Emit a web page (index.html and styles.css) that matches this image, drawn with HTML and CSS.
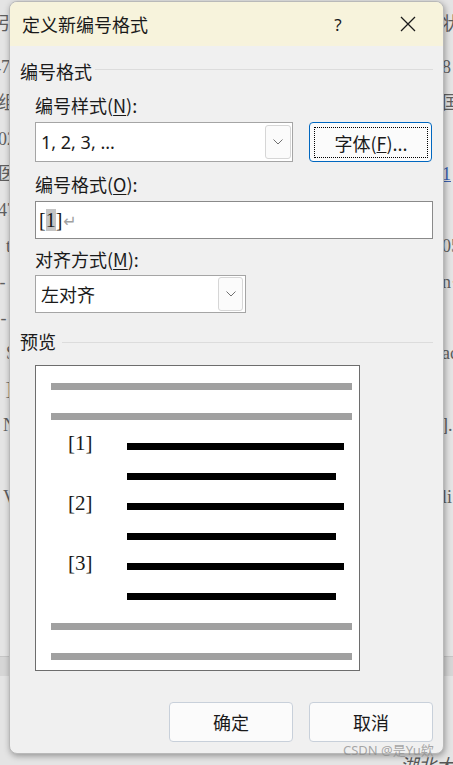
FILE: index.html
```html
<!DOCTYPE html>
<html lang="zh-CN">

<head>
    <meta charset="UTF-8">
    <meta name="viewport" content="width=device-width, initial-scale=1.0">
    <title>定义新编号格式</title>
    <link rel="stylesheet" href="styles.css">
</head>

<body>
    <!-- 背后的文档 -->
    <div class="doc">
        <div class="doc-line first"><span class="l">指引</span><span class="r">状态</span></div>
        <div class="doc-line"><span class="l">47[</span><span class="r">8</span></div>
        <div class="doc-line"><span class="l">会组</span><span class="r">国和</span></div>
        <div class="doc-line"><span class="l">02</span><span class="r"></span></div>
        <div class="doc-line"><span class="l">[医</span><span class="r link">1</span></div>
        <div class="doc-line"><span class="l">47</span><span class="r"></span></div>
        <div class="doc-line"><span class="l">ti</span><span class="r">05</span></div>
        <div class="doc-line"><span class="l">- (</span><span class="r">n·</span></div>
        <div class="doc-line"><span class="l">- :</span><span class="r"></span></div>
        <div class="doc-line"><span class="l">S</span><span class="r">ac</span></div>
        <div class="doc-line"><span class="l">].</span><span class="r"></span></div>
        <div class="doc-line"><span class="l">N</span><span class="r">].</span></div>
        <div class="doc-line"><span class="l"></span><span class="r"></span></div>
        <div class="doc-line"><span class="l">V</span><span class="r">li</span></div>
        <div class="doc-band"></div>
        <div class="doc-foot">湖北大学</div>
    </div>

    <div class="dialog">
        <div class="titlebar">
            <span class="title">定义新编号格式</span>
            <span class="help">?</span>
            <span class="close">
                <svg width="16" height="16" viewBox="0 0 16 16"><path d="M1 1L15 15M15 1L1 15" stroke="#1a1a1a" stroke-width="1.3" fill="none"/></svg>
            </span>
        </div>
        <div class="body">
            <div class="group-head"><span>编号格式</span><i></i></div>
            <div class="field">
                <div class="label">编号样式(<u>N</u>):</div>
                <div class="row">
                    <div class="select style-sel">
                        <span class="val latin">1, 2, 3, ...</span>
                        <b class="drop"><svg width="10" height="6" viewBox="0 0 10 6"><path d="M0.5 0.5L5 5L9.5 0.5" fill="none" stroke="#707070"/></svg></b>
                    </div>
                    <div class="btn font-btn"><span class="focus">字体(<u>F</u>)...</span></div>
                </div>
                <div class="label">编号格式(<u>O</u>):</div>
                <div class="input"><span class="serif">[<em class="sel">1</em>]</span><span class="mark">↵</span></div>
                <div class="label label-m">对齐方式(<u>M</u>):</div>
                <div class="select align-sel">
                    <span class="val">左对齐</span>
                    <b class="drop"><svg width="10" height="6" viewBox="0 0 10 6"><path d="M0.5 0.5L5 5L9.5 0.5" fill="none" stroke="#707070"/></svg></b>
                </div>
            </div>
            <div class="group-head preview-head"><span>预览</span><i></i></div>
            <div class="field">
                <div class="preview">
                    <div class="pv gray"></div>
                    <div class="pv gray"></div>
                    <div class="pv item"><span class="num">[1]</span><b class="bar"></b></div>
                    <div class="pv item"><b class="bar short"></b></div>
                    <div class="pv item"><span class="num">[2]</span><b class="bar"></b></div>
                    <div class="pv item"><b class="bar short"></b></div>
                    <div class="pv item"><span class="num">[3]</span><b class="bar"></b></div>
                    <div class="pv item"><b class="bar short"></b></div>
                    <div class="pv gray"></div>
                    <div class="pv gray last"></div>
                </div>
            </div>
            <div class="actions">
                <div class="btn">确定</div>
                <div class="btn">取消</div>
            </div>
        </div>
    </div>

    <div class="watermark">CSDN @是Yu欸</div>
</body>

</html>
```

FILE: styles.css
```css
* {
    margin: 0;
    padding: 0;
    box-sizing: border-box;
}
body {
    width: 453px;
    height: 765px;
    overflow: hidden;
    position: relative;
    background: #e4e4e4;
    font-family: "Noto Sans CJK SC", sans-serif;
    color: #1a1a1a;
}

/* 背后的文档 */
.doc {
    padding-top: 7px;
    font-family: "Liberation Serif", "Noto Sans CJK SC", serif;
    font-size: 18px;
    color: #5f5f5f;
}
.doc-line {
    display: flex;
    height: 35.8px;
    line-height: 35.8px;
}
.doc-line.first {
    height: 36px;
    margin-bottom: 7px;
}
.doc-line .l {
    display: flex;
    justify-content: flex-end;
    width: 16px;
    white-space: nowrap;
}
.doc-line .r {
    margin-left: auto;
    width: 11px;
    white-space: nowrap;
}
.doc-line .link {
    color: #3a5fb0;
    text-decoration: underline;
}
.doc-band {
    margin-top: 141px;
    height: 20px;
    background: #d6d6d6;
    border-top: 1px solid #c6c6c6;
}
.doc-foot {
    margin-top: 76px;
    padding-left: 400px;
    line-height: 24px;
    font-style: italic;
    font-family: "Noto Sans CJK SC", sans-serif;
    color: #555;
    white-space: nowrap;
}

/* 对话框 */
.dialog {
    position: absolute;
    left: 9px;
    top: 1px;
    width: 435px;
    height: 753px;
    background: #f0f0f0;
    border: 1px solid #b9b9b9;
    border-radius: 8px;
    box-shadow: 1px 2px 6px rgba(0, 0, 0, .35);
    overflow: hidden;
}
.titlebar {
    display: flex;
    align-items: center;
    height: 44px;
    padding-left: 12px;
    background: #f7f3dc;
    font-size: 18px;
}
.titlebar .help {
    margin-left: auto;
    width: 40px;
    text-align: center;
    font-family: "Noto Sans", sans-serif;
    font-size: 17px;
}
.titlebar .close {
    display: flex;
    align-items: center;
    justify-content: center;
    width: 70px;
    margin-left: 15px;
    height: 44px;
}

.body {
    padding: 0 10px;
    font-size: 18px;
}
.group-head {
    display: flex;
    align-items: center;
    height: 24px;
    line-height: 24px;
    margin-top: 13px;
}
.group-head i {
    flex: 1;
    height: 1px;
    margin: -3px 0 0 3px;
    background: #dcdcdc;
}
.preview-head {
    margin-top: 16px;
}
.preview-head i {
    margin: 2px 0 0 6px;
}
.field {
    padding-left: 15px;
}
.label {
    height: 24px;
    line-height: 24px;
    margin-top: 10px;
}
.label u {
    text-underline-offset: 2px;
}
.label-m {
    margin-top: 8px;
}
.row {
    display: flex;
    margin-top: 5px;
}
.select {
    display: flex;
    align-items: center;
    height: 40px;
    background: #fff;
    border: 1px solid #a5a5a5;
    padding-left: 5px;
}
.style-sel {
    width: 258px;
}
.align-sel {
    width: 211px;
    height: 38px;
    margin-top: 4px;
}
.select .val {
    flex: 1;
}
.latin {
    font-family: "Noto Sans", "Noto Sans CJK SC", sans-serif;
    font-size: 18px;
}
.select .drop {
    display: flex;
    align-items: center;
    justify-content: center;
    width: 26px;
    height: 34px;
    margin-right: 1px;
    background: #fbfbfb;
    border: 1px solid #d6d6d6;
    border-radius: 3px;
}
.align-sel .drop {
    width: 25px;
    height: 34px;
    margin-right: 2px;
}
.btn {
    display: flex;
    align-items: center;
    justify-content: center;
    width: 124px;
    height: 40px;
    background: #fbfbfb;
    border: 1px solid #c8d0da;
    border-radius: 4px;
}
.font-btn {
    width: 123px;
    margin-left: 16px;
    border-color: #0067c0;
    padding: 4px 3px 3px 4px;
}
.font-btn .focus {
    display: flex;
    align-items: center;
    justify-content: center;
    width: 100%;
    height: 100%;
    border: 1px dotted #000;
}
.input {
    display: flex;
    align-items: center;
    width: 398px;
    height: 38px;
    margin-top: 5px;
    padding-left: 3px;
    background: #fff;
    border: 1px solid #8a8a8a;
}
.serif {
    font-family: "Liberation Serif", serif;
    font-size: 20px;
}
.input .sel {
    font-style: normal;
    background: #c4c4c4;
}
.input .mark {
    color: #a0a0a0;
    font-family: "DejaVu Sans", sans-serif;
    font-size: 16px;
    margin: 2px 0 0 1px;
}

/* 预览 */
.preview {
    width: 325px;
    height: 306px;
    margin-top: 12px;
    padding: 17px 7px 0 15px;
    background: #fff;
    border: 1px solid #6d6d6d;
}
.pv {
    display: flex;
    align-items: center;
    height: 7px;
    margin-bottom: 23px;
}
.pv.gray {
    background: #a0a0a0;
}
.pv.last {
    margin-bottom: 0;
}
.pv .num {
    width: 0;
    margin: -7px 0 0 17px;
    font-family: "Liberation Serif", serif;
    font-size: 21px;
    line-height: 22px;
    white-space: nowrap;
}
.pv .bar {
    flex-shrink: 0;
    height: 7px;
    width: 217px;
    margin-left: 76px;
    background: #000;
}
.pv .num + .bar {
    margin-left: 59px;
}
.pv .bar.short {
    width: 209px;
}

.actions {
    display: flex;
    justify-content: flex-end;
    gap: 16px;
    margin-top: 31px;
}

.watermark {
    position: absolute;
    left: 343px;
    top: 740px;
    font-family: "Noto Sans", "Noto Sans CJK SC", sans-serif;
    font-size: 13px;
    color: rgba(140, 140, 140, .75);
    white-space: nowrap;
}
```
